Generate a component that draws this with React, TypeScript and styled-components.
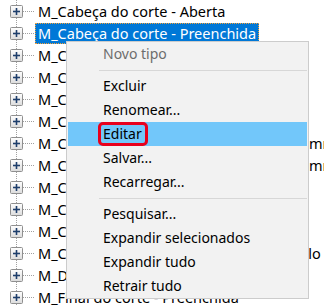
import React from "react";
import styled, { createGlobalStyle } from "styled-components";

const Global = createGlobalStyle`
  html, body { margin: 0; padding: 0; background: #ffffff; }
  body { width: 324px; height: 306px; overflow: hidden; }
  #root { position: relative; width: 324px; height: 306px; overflow: hidden; }
`;

const Page = styled.div`
  position: relative;
  width: 324px;
  height: 306px;
  overflow: hidden;
  font-family: "Noto Sans", "Open Sans", sans-serif;
`;

const Tree = styled.div`
  display: flex;
  flex-direction: column;
`;

const Row = styled.div`
  display: flex;
  align-items: center;
  height: 22px;
  white-space: nowrap;
`;

const Gutter = styled.svg`
  flex: 0 0 35px;
  width: 35px;
  height: 22px;
  display: block;
`;

const Label = styled.span<{ $selected?: boolean }>`
  display: inline-block;
  height: 21px;
  line-height: 21px;
  padding: 0 3px;
  font-size: 14.5px;
  color: ${(p) => (p.$selected ? "#ffffff" : "#000000")};
  background: ${(p) => (p.$selected ? "#0078d7" : "transparent")};
  outline: ${(p) => (p.$selected ? "1px dotted #f3a23a" : "none")};
  outline-offset: -1px;
`;

const Menu = styled.div`
  position: absolute;
  left: 66px;
  top: 41px;
  width: 243px;
  box-sizing: border-box;
  background: #f2f2f2;
  border: 1px solid #cccccc;
  padding: 0 1px;
  display: flex;
  flex-direction: column;
`;

const Item = styled.div<{ $disabled?: boolean; $hover?: boolean }>`
  position: relative;
  height: 24px;
  line-height: 24px;
  padding-left: 35px;
  font-size: 14px;
  color: ${(p) => (p.$disabled ? "#6d6d6d" : "#000000")};
  background: ${(p) => (p.$hover ? "#72c7fa" : "transparent")};
  white-space: nowrap;
`;

const Separator = styled.div`
  height: 8px;
  display: flex;
  align-items: center;
  padding-left: 31px;
  &::after {
    content: "";
    flex: 1;
    height: 1px;
    background: #d7d7d7;
  }
`;

const Callout = styled.span`
  position: absolute;
  left: 30px;
  top: 0;
  width: 50px;
  height: 24px;
  box-sizing: border-box;
  border: 3px solid #e8001c;
  border-radius: 5px;
`;

const Expander = () => (
  <Gutter viewBox="0 0 35 22">
    <defs>
      <linearGradient id="exg" x1="0" y1="0" x2="0" y2="1">
        <stop offset="0" stopColor="#ffffff" />
        <stop offset="1" stopColor="#dcdcdc" />
      </linearGradient>
    </defs>
    <line x1="16.5" y1="0" x2="16.5" y2="22" stroke="#a0a0a0" strokeWidth="1" strokeDasharray="1 1" />
    <line x1="23" y1="11.5" x2="35" y2="11.5" stroke="#a0a0a0" strokeWidth="1" strokeDasharray="1 1" />
    <rect x="10.5" y="5.5" width="12" height="12" rx="1" fill="url(#exg)" stroke="#8f8f8f" />
    <line x1="13" y1="11.5" x2="20" y2="11.5" stroke="#1e3f6c" strokeWidth="1.6" />
    <line x1="16.5" y1="8" x2="16.5" y2="15" stroke="#1e3f6c" strokeWidth="1.6" />
  </Gutter>
);

const rows = [
  "M_Cabeça do corte - Aberta",
  "M_Cabeça do corte - Preenchida",
  "M_Cabeça do corte - Seta",
  "M_Cabeça do corte - Simples",
  "M_Chamada de detalhe",
  "M_Cota de elevação - Alvo",
  "M_Cota de elevação - Texto alinhado 2.5mm",
  "M_Cota de elevação - Texto alinhado 3.5mm",
  "M_Cota de inclinação",
  "M_Curvatura de nível",
  "M_Cruzamento",
  "M_Cota de inclinação - Seta e texto amplo",
  "M_Detalhe - Marcador",
  "M_Final do corte - Preenchida",
];

type MenuEntry = { label?: string; disabled?: boolean; hover?: boolean; sep?: boolean; callout?: boolean };

const menu: MenuEntry[] = [
  { label: "Novo tipo", disabled: true },
  { sep: true },
  { label: "Excluir" },
  { label: "Renomear..." },
  { label: "Editar", hover: true, callout: true },
  { label: "Salvar..." },
  { label: "Recarregar..." },
  { sep: true },
  { label: "Pesquisar..." },
  { label: "Expandir selecionados" },
  { label: "Expandir tudo" },
  { label: "Retrair tudo" },
];

export default function App() {
  return (
    <Page>
      <Global />
      <Tree>
        {rows.map((r, i) => (
          <Row key={i}>
            <Expander />
            <Label $selected={i === 1}>{r}</Label>
          </Row>
        ))}
      </Tree>
      <Menu>
        {menu.map((m, i) =>
          m.sep ? (
            <Separator key={i} />
          ) : (
            <Item key={i} $disabled={m.disabled} $hover={m.hover}>
              {m.label}
              {m.callout && <Callout />}
            </Item>
          )
        )}
      </Menu>
    </Page>
  );
}
